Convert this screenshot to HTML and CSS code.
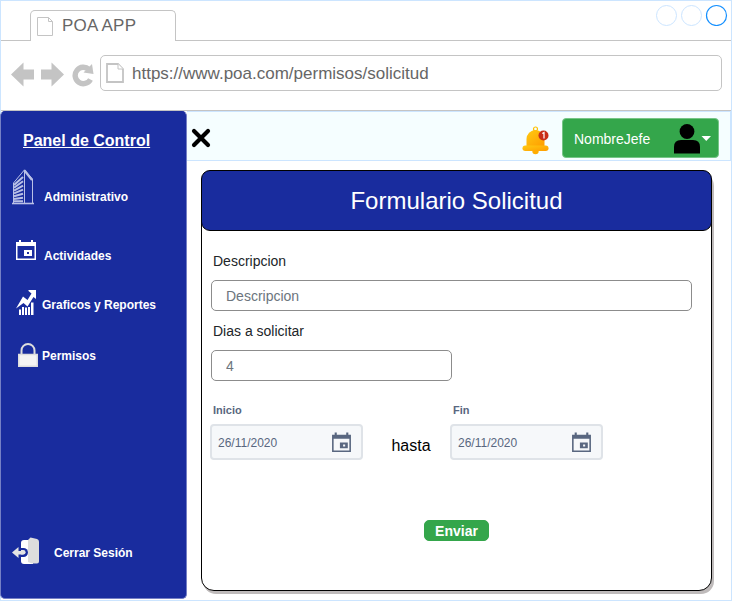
FILE: index.html
```html
<!DOCTYPE html>
<html lang="es">
<head>
<meta charset="utf-8">
<title>POA APP</title>
<link rel="stylesheet" href="styles.css">
</head>
<body>
<svg width="0" height="0" class="defs">
  <symbol id="calendar" viewBox="0 0 20 20">
    <path fill="currentColor" fill-rule="evenodd" d="M3.500 .5h2v2h9v-2h2v2H19V19H1V2.500h2.500zM2.500 6.500v11h15v-11z"/>
    <path fill="currentColor" fill-rule="evenodd" d="M8.500 10h7.500v5.500H8.500zM11.500 12v1.700h2V12z"/>
  </symbol>
</svg>
<div class="window">
  <div class="tabstrip">
    <div class="tab">
      <svg width="16" height="19" viewBox="0 0 16 19" fill="#fff" stroke="#c4c4c4"><path d="M.5.500h11l4 4v14H.500zM11.500.500v4h4"/></svg>
      <span>POA APP</span>
    </div>
    <svg class="controls" width="72" height="22" viewBox="0 0 72 22" fill="none" stroke="#cce5ff"><circle cx="10.500" cy="11.500" r="10"/><circle cx="35.500" cy="11.500" r="10"/><circle cx="60.500" cy="11.500" r="10" stroke="#1590ff" stroke-width="1.200"/></svg>
  </div>
  <div class="toolbar">
    <svg class="nav-icons" width="84" height="26" viewBox="0 0 84 26" fill="#c4c4c4">
      <path d="M0 13.500 12.500 1.500v7H23v10H12.500v7zM53 13.500 40.500 1.500v7H30v10h10.500v7z"/>
      <path d="M79.500 18.500a8.200 8.200 0 1 1-1.500-10" fill="none" stroke="#c4c4c4" stroke-width="5.400"/>
      <path d="m81 3 1.500 10-10-1.500z"/>
    </svg>
    <div class="url">
      <svg width="18" height="20" viewBox="0 0 18 20" fill="#fff" stroke="#c4c4c4" stroke-width="1.800"><path d="M1 1h11l5 5v13H1z"/><path d="M12 1v5h5" stroke-width="1"/></svg>
      <span>https://www.poa.com/permisos/solicitud</span>
    </div>
  </div>
  <div class="page">
    <nav class="sidebar">
      <h1>Panel de Control</h1>
      <a class="item admin">
        <svg width="22" height="36" viewBox="0 0 22 36" fill="none" stroke="#b9c0e6">
          <path d="M0 34.500h22" stroke-width="1.600"/>
          <path d="M1.500 34V14L12.500 .8 20.500 10v24M12.500 1v33"/>
          <path stroke-width="2.200" d="m12.500 1.500 7.500 9.500"/>
          <path stroke-width="2" d="m2 16 9-8M2 18.800l9-6.500M2 21.600l9-5M2 24.400l9-3.700M2 27.200l9-2.400M2 30l9-1.300M2 32.200h9"/>
        </svg><span>Administrativo</span></a>
      <a class="item activ"><svg width="22" height="22" viewBox="0 0 22 22" fill="#fff"><path fill-rule="evenodd" d="M4 1h2v2h10V1h2v2h3v18H1V3h3zM2.500 7v12.500h17V7z"/><path fill-rule="evenodd" d="M9 11h8v6H9zM12 13v2h2v-2z"/></svg><span>Actividades</span></a>
      <a class="item graf"><svg width="21" height="27" viewBox="0 0 21 27" fill="#fff">
        <path d="M0 19.500 7 7.500l4.500 3.500 4-6.500L12.500 2V1H20v9l-2.500-2-6 9.500L7.500 14z"/>
        <path d="M3 20.500h2V26H3zM6 18h2v8H6zM9 18.500h2V26H9zM12 18h2v8h-2zM15 13.500h2.500V26H15z"/>
      </svg><span>Graficos y Reportes</span></a>
      <a class="item perm"><svg width="20" height="24" viewBox="0 0 20 24"><path d="M3.500 12V7.500a6.500 6.500 0 0 1 13 0V12" fill="none" stroke="#ddd" stroke-width="2"/><path d="M.75 11.500h18.500v11.700H.75z" fill="#f4f4f4" stroke="#ddd" stroke-width="1.500"/></svg><span>Permisos</span></a>
      <a class="item salir"><svg width="28" height="28" viewBox="0 0 28 28"><path d="M9 6q0-3 3-3h9v24h-9q-3 0-3-3z" fill="#fff"/><path d="m16 3 2.500-2.500L25 2q2 .5 2 2.500v20q0 2-2 2h-5l-4-1.500z" fill="#ddd"/><path d="M8 11h3.500a4.500 4.500 0 0 1 0 9H8z" fill="#192c9e"/><path d="M0 15.500 6.500 10v4h5v3.500h-5V21z" fill="#e4e4e4"/><path d="M9 13h2.300a2.300 2.300 0 0 1 0 4.600H9" fill="#e4e4e4"/></svg><span>Cerrar Sesión</span></a>
    </nav>
    <div class="main">
      <header class="topbar">
        <svg class="close" width="20" height="20" viewBox="0 0 20 20"><path d="m3 3 14 14M17 3 3 17" stroke="#000" stroke-width="4.200" stroke-linecap="round"/></svg>
        <svg class="bell" width="28" height="29" viewBox="0 0 28 29">
          <defs><linearGradient id="gold" x2="1" y2="1"><stop offset="0" stop-color="#ffca12"/><stop offset="1" stop-color="#ff9d00"/></linearGradient></defs>
          <circle cx="13.500" cy="3" r="2" fill="none" stroke="#ffc000" stroke-width="1.200"/>
          <circle cx="13.500" cy="25" r="3.200" fill="#ffad00"/>
          <path d="M4.500 20v-7a9 9 0 0 1 18 0v7z" fill="url(#gold)"/>
          <rect x=".5" y="19.500" width="26" height="5.500" rx="2.750" fill="url(#gold)"/>
          <circle cx="21.500" cy="9.500" r="5" fill="#c92d17"/>
          <path d="m20.300 7.500 1.700-1v6" fill="none" stroke="#fff" stroke-width="1.200"/>
        </svg>
        <button class="user" type="button"><span>NombreJefe</span>
          <svg width="37" height="30" viewBox="0 0 37 30"><circle cx="13" cy="7.500" r="7.400"/><path d="M0 29.500V23q0-7 7-7h12q7 0 7 7v6.500z"/><path d="M27.500 12h9.500l-4.750 5z" fill="#fff"/></svg>
        </button>
      </header>
      <form class="card">
        <h2>Formulario Solicitud</h2>
        <div class="fields">
          <label for="desc">Descripcion</label>
          <input id="desc" class="wide" placeholder="Descripcion">
          <label for="dias">Dias a solicitar</label>
          <input id="dias" class="short" placeholder="4">
          <div class="dates">
            <div class="date"><small>Inicio</small><div class="picker"><span>26/11/2020</span><svg width="21" height="21"><use href="#calendar"/></svg></div></div>
            <span class="until">hasta</span>
            <div class="date"><small>Fin</small><div class="picker"><span>26/11/2020</span><svg width="21" height="21"><use href="#calendar"/></svg></div></div>
          </div>
          <button class="send" type="button">Enviar</button>
        </div>
      </form>
    </div>
  </div>
</div>
</body>
</html>
```
FILE: styles.css
```css
* { box-sizing: border-box; }
body { margin: 0; background: #fff; font-family: "Liberation Sans", Arial, sans-serif; }
.defs { display: none; }
svg { display: block; flex: none; }
button, input { font-family: inherit; }
.window { width: 732px; height: 601px; border: 1px solid #cce5ff; display: flex; flex-direction: column; }
.tabstrip { height: 40px; flex: none; border-bottom: 1px solid #c4c4c4; display: flex; justify-content: space-between; padding: 9px 3px 0 29px; }
.tab { width: 146px; height: 31px; border: 1px solid #c4c4c4; border-bottom: 0; border-radius: 5px 5px 0 0; background: #fff; display: flex; gap: 9px; padding: 6px 0 0 6px; color: #666; font-size: 17px; letter-spacing: .2px; line-height: 18px; }
.controls { margin-top: -6px; }
.toolbar { height: 70px; flex: none; border-bottom: 1px solid #c4c4c4; display: flex; padding: 14px 9px 0 10px; }
.nav-icons { margin: 6px 5px 0 0; }
.url { flex: 1; height: 36px; border: 1px solid #c4c4c4; border-radius: 5px; display: flex; align-items: center; gap: 8px; padding-left: 5px; color: #666; font-size: 17px; }
.url span { padding-top: 2px; }
.page { flex: 1; display: flex; min-height: 0; }
.sidebar { width: 187px; height: 488px; margin-left: -1px; flex: none; background: #192c9e; border: 1px solid #7580c5; border-top-color: #192c9e; border-radius: 5px; color: #fff; display: flex; flex-direction: column; }
.sidebar h1 { margin: 19px 0 0 22px; font-size: 16px; line-height: 20px; text-decoration: underline; }
.item { display: flex; font-size: 12px; font-weight: bold; line-height: 14px; }
.admin { margin: 18px 0 0 11px; gap: 10px; }
.admin span { padding-top: 21px; }
.activ { margin: 34px 0 0 14px; gap: 7px; }
.activ span { padding-top: 10px; }
.graf { margin: 26px 0 0 15px; gap: 5px; }
.graf span { padding-top: 9px; }
.perm { margin: 27px 0 0 17px; gap: 4px; }
.perm span { padding-top: 6px; }
.salir { margin: auto 0 33px 11px; gap: 14px; }
.salir span { padding-top: 9px; }
.main { flex: 1; min-width: 0; }
.topbar { height: 50px; background: #f5feff; border: solid #cce5ff; border-width: 1px 1px 1px 0; display: flex; padding-left: 4px; }
.close { margin-top: 16px; }
.bell { margin: 14px 12px 0 311px; }
.user { width: 157px; height: 40px; margin-top: 6px; padding: 0 7px 0 11px; border: 1px solid #76c587; border-radius: 4px; background: #34a64b; color: #fff; font-size: 14px; display: flex; align-items: center; justify-content: space-between; }
.user span { padding-top: 2px; }
.user svg { margin-top: 2px; }
.card { width: 511px; height: 421px; margin: 9px 0 0 14px; border: 1px solid #000; border-radius: 13px; background: #fff; box-shadow: 2px 3px 0 #bfbbbb; }
.card h2 { height: 61px; margin: -1px; border: 1px solid #000; border-radius: 9px; background: #192c9e; color: #fff; font-size: 24px; font-weight: normal; line-height: 60px; text-align: center; }
.fields { display: flex; flex-direction: column; padding: 22px 0 0 9px; }
.fields label { margin-left: 2px; color: #212529; font-size: 14px; line-height: 18px; }
.fields input { height: 31px; margin: 10px 0 11px; padding: 0 14px; border: 1px solid #8c8c8c; border-radius: 5px; color: #6c757d; font-size: 14px; }
.fields input::placeholder { color: #6c757d; opacity: 1; }
.wide { width: 481px; }
.short { width: 241px; }
.dates { display: flex; align-items: flex-end; margin: 12px 0 0 -1px; }
.date small { display: block; margin: 0 0 7px 3px; color: #596780; font-size: 11px; font-weight: bold; line-height: 13px; }
.picker { width: 153px; height: 36px; padding: 0 9px 0 6px; border: 2px solid #dfe3e8; border-radius: 4px; background: #f6f8fa; color: #596780; font-size: 12px; display: flex; align-items: center; justify-content: space-between; }
.picker span { padding-top: 2px; }
.until { width: 87px; padding-left: 9px; text-align: center; font-size: 16px; line-height: 18px; margin-bottom: 5px; }
.send { width: 65px; height: 21px; margin: 60px 0 0 213px; padding: 0; border: 1px solid #34a64b; border-radius: 5px; background: #34a64b; color: #fff; font-size: 14px; font-weight: bold; line-height: 20px; }
```
